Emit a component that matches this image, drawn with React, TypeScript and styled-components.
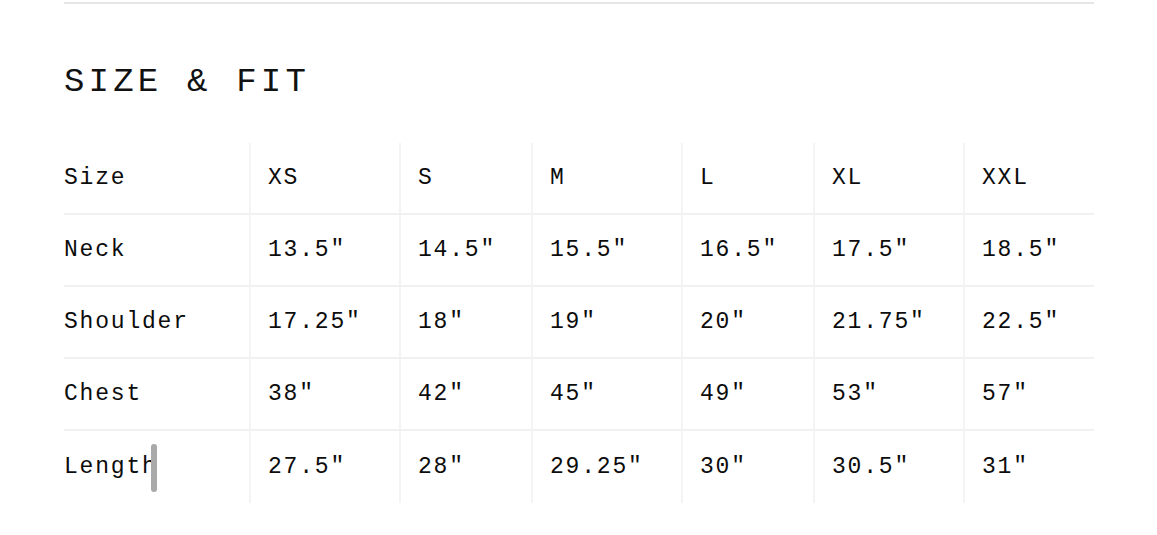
import React from "react";
import styled, { createGlobalStyle } from "styled-components";

const Global = createGlobalStyle`
  html, body { margin: 0; padding: 0; background: #ffffff; }
  body { font-family: "Courier New", "Liberation Mono", monospace; color: #111; }
`;

const Page = styled.div`
  width: 1157px;
  height: 535px;
  padding: 0 63px 0 64px;
  box-sizing: border-box;
  overflow: hidden;
`;

const Rule = styled.div`
  margin-top: 2px;
  height: 2px;
  background: #e6e6e6;
`;

const Title = styled.h2`
  margin: 0;
  padding-top: 58px;
  height: 139px;
  box-sizing: border-box;
  font-family: "Courier New", "Liberation Mono", monospace;
  font-weight: 400;
  font-size: 34px;
  line-height: 40px;
  letter-spacing: 4.2px;
  color: #111;
`;

const Table = styled.div`
  display: flex;
  flex-direction: column;
  width: 1030px;
`;

const Row = styled.div<{ $last?: boolean }>`
  display: grid;
  grid-template-columns: 185px 150px 132px 150px 132px 150px 131px;
  height: 72px;
  box-sizing: border-box;
  border-bottom: ${(p) => (p.$last ? "none" : "2px solid #f1f1f1")};
`;

const Cell = styled.div<{ $first?: boolean }>`
  position: relative;
  display: flex;
  align-items: center;
  padding-left: ${(p) => (p.$first ? "0" : "17px")};
  border-left: ${(p) => (p.$first ? "none" : "2px solid #f4f4f4")};
  box-sizing: border-box;
  font-size: 23px;
  letter-spacing: 1.8px;
  color: #0c0c0c;
  white-space: nowrap;
`;

const Handle = styled.span`
  position: absolute;
  left: 87px;
  top: 13px;
  width: 6px;
  height: 48px;
  border-radius: 3px;
  background: #a9a9a9;
`;

const header = ["Size", "XS", "S", "M", "L", "XL", "XXL"];
const rows: string[][] = [
  ["Neck", '13.5"', '14.5"', '15.5"', '16.5"', '17.5"', '18.5"'],
  ["Shoulder", '17.25"', '18"', '19"', '20"', '21.75"', '22.5"'],
  ["Chest", '38"', '42"', '45"', '49"', '53"', '57"'],
  ["Length", '27.5"', '28"', '29.25"', '30"', '30.5"', '31"'],
];

export default function App() {
  const all = [header, ...rows];
  return (
    <>
      <Global />
      <Page>
        <Rule />
        <Title>SIZE &amp; FIT</Title>
        <Table>
          {all.map((r, i) => (
            <Row key={i} $last={i === all.length - 1}>
              {r.map((c, j) => (
                <Cell key={j} $first={j === 0}>
                  {c}
                  {i === all.length - 1 && j === 0 && <Handle />}
                </Cell>
              ))}
            </Row>
          ))}
        </Table>
      </Page>
    </>
  );
}
